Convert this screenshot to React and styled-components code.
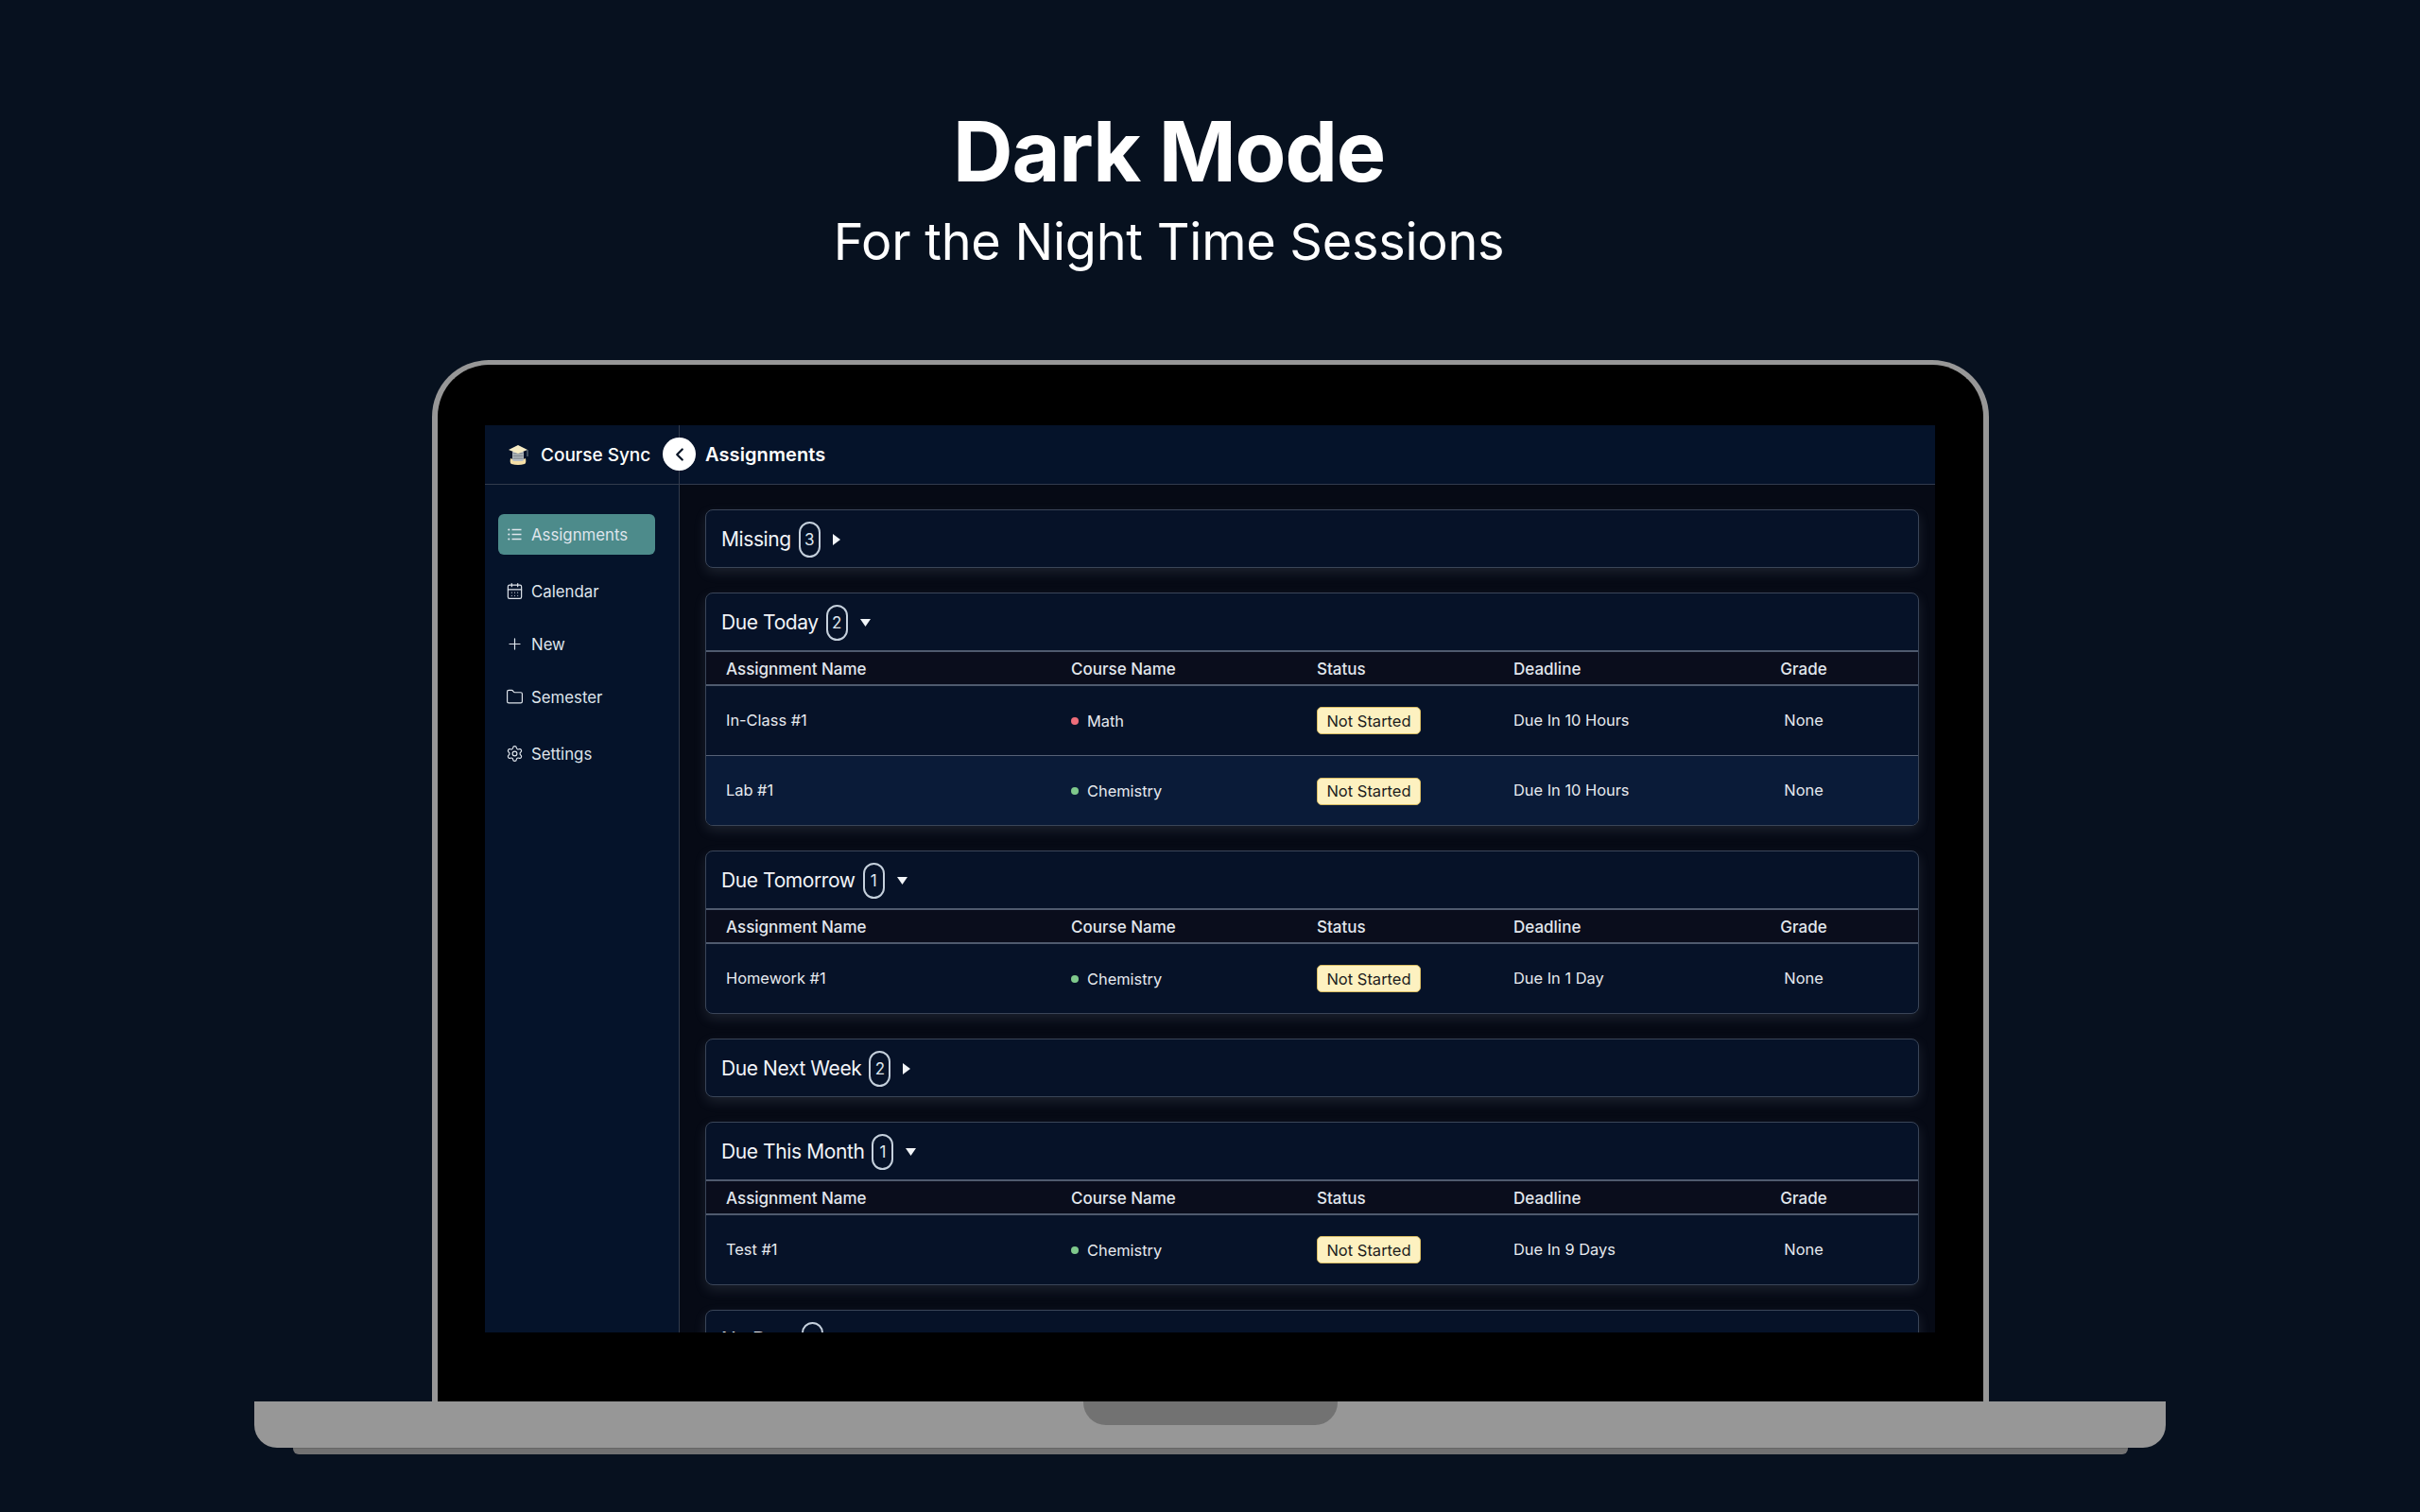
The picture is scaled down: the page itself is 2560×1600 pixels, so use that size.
import React from 'react'
import styled, { createGlobalStyle } from 'styled-components'
import { CalendarDays, Plus, Folder, Settings, ChevronLeft } from 'lucide-react'

const GlobalStyle = createGlobalStyle`
  html, body {
    margin: 0;
    background: #07111f;
    font-family: 'Inter', 'Liberation Sans', sans-serif;
  }
  * {
    box-sizing: border-box;
  }
`

const Page = styled.div`
  width: 2560px;
  height: 1600px;
  overflow: hidden;
  padding-top: 110px;
  display: flex;
  flex-direction: column;
  align-items: center;
  color: #fff;
`

const Hero = styled.div`
  height: 271px;
  padding-right: 87px;
  display: flex;
  flex-direction: column;
  align-items: center;
`

const Heading = styled.h1`
  margin: 0;
  font-size: 88px;
  line-height: 100px;
  font-weight: 700;
  letter-spacing: -1.2px;
`

const SubHeading = styled.h2`
  margin: 16px 0 0;
  font-size: 54px;
  line-height: 60px;
  font-weight: 400;
  letter-spacing: -0.25px;
`

const Lid = styled.div`
  width: 1647px;
  height: 1102px;
  flex: none;
  margin-left: 1px;
  padding: 64px 0 0 50px;
  background: #000;
  border: 6px solid #979797;
  border-top-width: 5px;
  border-bottom: 0;
  border-radius: 60px 60px 0 0;
`

const Screen = styled.div`
  width: 1534px;
  height: 960px;
  overflow: hidden;
  display: flex;
  flex-direction: column;
  background: #05132a;
`

const TopBar = styled.header`
  position: relative;
  height: 63px;
  flex: none;
  display: flex;
  align-items: center;
  border-bottom: 1px solid #323b4d;
`

const Brand = styled.div`
  width: 206px;
  height: 100%;
  padding-left: 25px;
  display: flex;
  align-items: center;
  gap: 13px;
  border-right: 1px solid #323b4d;
  font-size: 19px;
  font-weight: 500;
`

const CollapseButton = styled.button`
  position: absolute;
  left: 188px;
  top: 13px;
  width: 35px;
  height: 35px;
  padding: 0;
  display: flex;
  align-items: center;
  justify-content: center;
  border: 0;
  border-radius: 50%;
  background: #fff;
  color: #0b1526;
`

const PageTitle = styled.div`
  margin-left: 27px;
  font-size: 20px;
  font-weight: 600;
  letter-spacing: 0.1px;
`

const Body = styled.div`
  flex: 1;
  min-height: 0;
  display: flex;
`

const Sidebar = styled.nav`
  width: 206px;
  flex: none;
  padding: 31px 0 0 14px;
  border-right: 1px solid #323b4d;
`

const NavItem = styled.div`
  width: 166px;
  height: 43px;
  margin-top: ${(p) => p.$gap || 0}px;
  padding-left: 8px;
  display: flex;
  align-items: center;
  gap: 8px;
  border-radius: 6px;
  font-size: 16.8px;
  color: #dfe5ec;
  background: ${(p) => (p.$active ? '#4d8b8b' : 'transparent')};
`

const Main = styled.main`
  flex: 1;
  min-width: 0;
  padding: 26px 17px 0 27px;
  display: flex;
  flex-direction: column;
  gap: 26px;
  background: #060a15;
`

const Card = styled.section`
  flex: none;
  background: #061228;
  border: 1px solid #3a4558;
  border-radius: 8px;
  box-shadow: 0 5px 13px rgba(175, 190, 215, 0.13);
  overflow: hidden;
`

const CardHeader = styled.div`
  height: 60px;
  padding: 1px 0 0 16px;
  display: flex;
  align-items: center;
`

const CardTitle = styled.span`
  font-size: 21px;
  letter-spacing: -0.4px;
  color: #f1f4f8;
`

const CountPill = styled.span`
  width: 23px;
  height: 38px;
  margin-left: 8px;
  display: flex;
  align-items: center;
  justify-content: center;
  border: 2px solid #c5d0dc;
  border-radius: 12px;
  font-size: 17px;
  color: #dfe6ee;
`

const Caret = styled.svg`
  margin-left: 13px;
  fill: #f2f5f8;
`

const TableRow = styled.div`
  display: grid;
  grid-template-columns: 365px 260px 208px 259px 96px;
  align-items: center;
  padding-left: 21px;
`

const HeadRow = styled(TableRow)`
  height: 38px;
  padding-top: 1px;
  background: #0a0d1c;
  border-top: 2px solid #4f5a6e;
  border-bottom: 2px solid #4f5a6e;
  font-size: 17px;
  font-weight: 500;
  color: #e2e7ed;
`

const DataRow = styled(TableRow)`
  height: 73px;
  padding-bottom: 2px;
  font-size: 16.4px;
  color: #e6eaef;
  background: ${(p) => (p.$highlight ? '#0a1b38' : 'transparent')};

  & + & {
    height: 74px;
    padding-bottom: 1px;
    border-top: 1px solid #566176;
  }
`

const CourseCell = styled.span`
  display: flex;
  align-items: center;
  gap: 9px;
  padding-top: 2px;
`

const Dot = styled.span`
  width: 8px;
  height: 8px;
  border-radius: 50%;
  background: ${(p) => p.$color};
`

const StatusTag = styled.span`
  width: 110px;
  height: 29px;
  margin-top: 2px;
  display: flex;
  align-items: center;
  justify-content: center;
  background: #fdf1c0;
  border: 1px solid #d9bd64;
  border-radius: 5px;
  font-size: 16.5px;
  color: #1c1c1c;
`

const GradeCell = styled.span`
  text-align: center;
`

const Base = styled.div`
  width: 2022px;
  height: 49px;
  flex: none;
  display: flex;
  justify-content: center;
  background: #979797;
  border-radius: 0 0 24px 24px;
`

const Notch = styled.div`
  width: 269px;
  height: 25px;
  background: #727272;
  border-radius: 0 0 24px 24px;
`

const Foot = styled.div`
  width: 1941px;
  height: 7px;
  flex: none;
  margin-left: 1px;
  background: #727272;
  border-top: 1px solid #666;
  border-radius: 0 0 6px 6px;
`

const RED = '#ee6d7a'
const GREEN = '#7fc98c'

const groups = [
  { title: 'Missing', count: 3 },
  {
    title: 'Due Today',
    count: 2,
    rows: [
      { name: 'In-Class #1', course: 'Math', dot: RED, deadline: 'Due In 10 Hours' },
      { name: 'Lab #1', course: 'Chemistry', dot: GREEN, deadline: 'Due In 10 Hours', highlight: true },
    ],
  },
  {
    title: 'Due Tomorrow',
    count: 1,
    rows: [{ name: 'Homework #1', course: 'Chemistry', dot: GREEN, deadline: 'Due In 1 Day' }],
  },
  { title: 'Due Next Week', count: 2 },
  {
    title: 'Due This Month',
    count: 1,
    rows: [{ name: 'Test #1', course: 'Chemistry', dot: GREEN, deadline: 'Due In 9 Days' }],
  },
  { title: 'No Date', count: 0 },
]

// lucide's list dots come out too faint at this size
const ListIcon = ({ size }) => (
  <svg width={size} height={size} viewBox="0 0 19 19" fill="none" stroke="currentColor" strokeWidth="1.3">
    <path d="M6.5 4.5h10M6.5 9.5h10M6.5 14.5h10" />
    <g fill="currentColor" stroke="none">
      <circle cx="3.3" cy="4.5" r="1.1" />
      <circle cx="3.3" cy="9.5" r="1.1" />
      <circle cx="3.3" cy="14.5" r="1.1" />
    </g>
  </svg>
)

const navItems = [
  { label: 'Assignments', icon: ListIcon, active: true },
  { label: 'Calendar', icon: CalendarDays, gap: 17 },
  { label: 'New', icon: Plus, gap: 13 },
  { label: 'Semester', icon: Folder, gap: 13 },
  { label: 'Settings', icon: Settings, gap: 17 },
]

const CapLogo = () => (
  <svg width="21" height="23" viewBox="0 0 21 23">
    <path d="M2 15 Q1 20 3 21 Q10 23 17 21 Q19 20 18 15 Q10 19 2 15Z" fill="#f6dfa6" />
    <rect x="4" y="7" width="12" height="11" rx="2" fill="#b9bfc4" />
    <path d="M4.5 10h11M4.5 12.5h11M4.5 15h11" stroke="#6f777e" strokeWidth="1" />
    <path d="M0 6 L10 1 L20 6 L10 10Z" fill="#f7ecc4" />
    <path d="M20 6v7" stroke="#7b8794" strokeWidth="1" />
  </svg>
)

const Group = ({ group }) => {
  const open = Boolean(group.rows)
  return (
    <Card>
      <CardHeader>
        <CardTitle>{group.title}</CardTitle>
        <CountPill>{group.count || ''}</CountPill>
        {open ? (
          <Caret width="11" height="8" viewBox="0 0 11 8">
            <path d="M0 0h11L5.5 8z" />
          </Caret>
        ) : (
          <Caret width="8" height="12" viewBox="0 0 8 12">
            <path d="M0 0l8 6-8 6z" />
          </Caret>
        )}
      </CardHeader>
      {open && (
        <>
          <HeadRow>
            <span>Assignment Name</span>
            <span>Course Name</span>
            <span>Status</span>
            <span>Deadline</span>
            <GradeCell>Grade</GradeCell>
          </HeadRow>
          {group.rows.map((row) => (
            <DataRow key={row.name} $highlight={row.highlight}>
              <span>{row.name}</span>
              <CourseCell>
                <Dot $color={row.dot} />
                {row.course}
              </CourseCell>
              <StatusTag>Not Started</StatusTag>
              <span>{row.deadline}</span>
              <GradeCell>None</GradeCell>
            </DataRow>
          ))}
        </>
      )}
    </Card>
  )
}

export default function App() {
  return (
    <Page>
      <GlobalStyle />
      <Hero>
        <Heading>Dark Mode</Heading>
        <SubHeading>For the Night Time Sessions</SubHeading>
      </Hero>
      <Lid>
        <Screen>
          <TopBar>
            <Brand>
              <CapLogo />
              Course Sync
            </Brand>
            <CollapseButton>
              <ChevronLeft size={22} strokeWidth={2.5} />
            </CollapseButton>
            <PageTitle>Assignments</PageTitle>
          </TopBar>
          <Body>
            <Sidebar>
              {navItems.map(({ label, icon: Icon, active, gap }) => (
                <NavItem key={label} $active={active} $gap={gap}>
                  <Icon size={19} strokeWidth={1.5} />
                  {label}
                </NavItem>
              ))}
            </Sidebar>
            <Main>
              {groups.map((group) => (
                <Group key={group.title} group={group} />
              ))}
            </Main>
          </Body>
        </Screen>
      </Lid>
      <Base>
        <Notch />
      </Base>
      <Foot />
    </Page>
  )
}
